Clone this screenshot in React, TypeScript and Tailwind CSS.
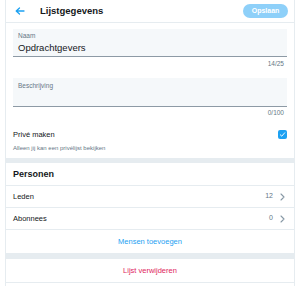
import React from "react";

function Chevron() {
  return (
    <svg width="5" height="8" viewBox="0 0 5 8" className="ml-[7px]">
      <path d="M1 1 L4 4 L1 7" fill="none" stroke="#8899a6" strokeWidth="1.1" strokeLinecap="round" strokeLinejoin="round" />
    </svg>
  );
}

export default function App() {
  return (
    <div className="w-[300px] h-[286px] bg-white font-['Liberation_Sans',Arial,sans-serif] overflow-hidden">
      <div className="ml-[5px] w-[290px] h-full border-x border-[#e6ecf0] flex flex-col">
        {/* header */}
        <div className="h-[23px] shrink-0 border-b border-[#e6ecf0] flex items-center pl-[9px] pr-[6px]">
          <svg width="10" height="8" viewBox="0 0 10 8">
            <path d="M9 4 H1.5 M4.5 1 L1.2 4 L4.5 7" fill="none" stroke="#1da1f2" strokeWidth="1.3" strokeLinecap="round" strokeLinejoin="round" />
          </svg>
          <div className="ml-[15px] text-[9.5px] font-bold text-[#14171a] leading-none">Lijstgegevens</div>
          <div className="ml-auto h-[14px] w-[45px] rounded-full bg-[#8ed0f9] text-white text-[7px] font-bold flex items-center justify-center">
            Opslaan
          </div>
        </div>

        {/* name field */}
        <div className="px-[7px] pt-[6px]">
          <div className="h-[28px] bg-[#f5f8fa] border-b-[1.5px] border-[#8d9aa5] px-[5px] flex flex-col">
            <div className="mt-[3px] text-[6.5px] leading-[8px] text-[#657786]">Naam</div>
            <div className="mt-[2px] text-[9.5px] leading-[12px] text-[#14171a]">Opdrachtgevers</div>
          </div>
          <div className="h-[14px] flex items-center justify-end pr-[3px] text-[6.5px] text-[#657786]">14/25</div>
          <div className="mt-[7px] h-[29px] bg-[#f5f8fa] border-b-[1.5px] border-[#8d9aa5] px-[5px] flex flex-col">
            <div className="mt-[4px] text-[6.5px] leading-[8px] text-[#657786]">Beschrijving</div>
          </div>
          <div className="h-[12px] flex items-center justify-end pr-[3px] text-[6.5px] text-[#657786]">0/100</div>
        </div>

        {/* private */}
        <div className="mt-[6px] h-[19px] flex items-center justify-between px-[7px]">
          <div className="text-[7.5px] text-[#14171a]">Privé maken</div>
          <div className="w-[9px] h-[9px] rounded-[2px] bg-[#1da1f2] flex items-center justify-center">
            <svg width="7" height="7" viewBox="0 0 7 7">
              <path d="M1.3 3.8 L2.8 5.2 L5.7 1.8" fill="none" stroke="white" strokeWidth="0.9" strokeLinecap="round" strokeLinejoin="round" />
            </svg>
          </div>
        </div>
        <div className="h-[14px] flex items-start px-[7px] text-[6px] leading-[8px] text-[#657786]">
          Alleen jij kan een privélijst bekijken
        </div>

        <div className="h-[5px] bg-[#e6ecf0] shrink-0" />

        {/* people */}
        <div className="h-[23px] border-b border-[#e6ecf0] flex items-center px-[7px] pt-[1px]">
          <div className="text-[9px] font-bold text-[#14171a]">Personen</div>
        </div>
        <div className="h-[22px] border-b border-[#e6ecf0] flex items-center justify-between pl-[7px] pr-[9px]">
          <div className="text-[7.5px] text-[#14171a]">Leden</div>
          <div className="flex items-center text-[7px] text-[#657786]">
            12
            <Chevron />
          </div>
        </div>
        <div className="h-[22px] border-b border-[#e6ecf0] flex items-center justify-between pl-[7px] pr-[9px]">
          <div className="text-[7.5px] text-[#14171a]">Abonnees</div>
          <div className="flex items-center text-[7px] text-[#657786]">
            0
            <Chevron />
          </div>
        </div>
        <div className="h-[23px] flex items-center justify-center text-[7.5px] text-[#1da1f2]">
          Mensen toevoegen
        </div>
        <div className="h-[6px] bg-[#e6ecf0] shrink-0" />
        <div className="h-[24px] border-b border-[#e6ecf0] flex items-center justify-center text-[7.5px] text-[#e0245e]">
          Lijst verwijderen
        </div>
      </div>
    </div>
  );
}
